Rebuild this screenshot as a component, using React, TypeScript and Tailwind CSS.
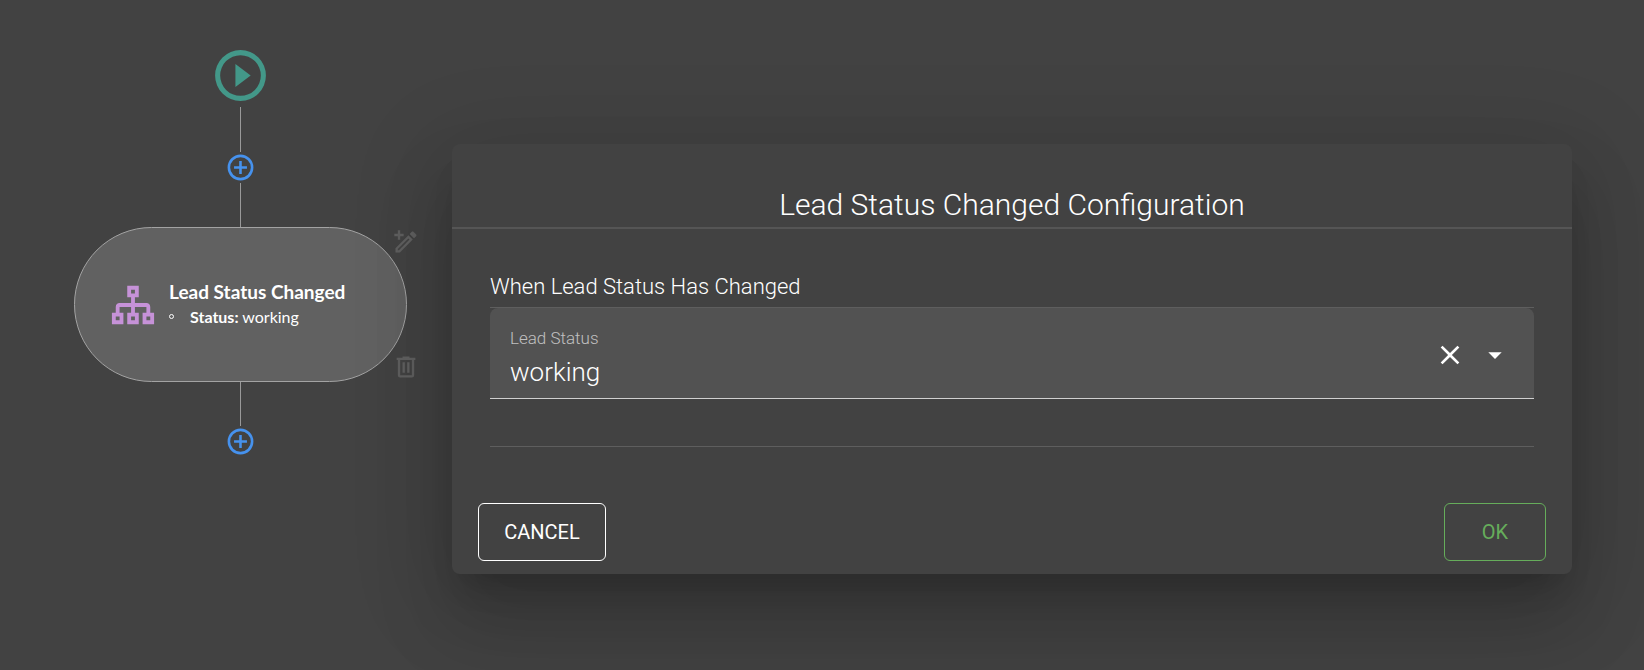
import { useState } from "react";

function Icon({ d, className }: { d: string; className: string }) {
  return (
    <svg viewBox="0 0 24 24" fill="currentColor" aria-hidden="true" className={className}>
      <path d={d} />
    </svg>
  );
}

const PLAY =
  "M12 2a10 10 0 1 0 0 20 10 10 0 0 0 0-20zm0 18a8 8 0 1 1 0-16 8 8 0 0 1 0 16zm-2-3.5 6-4.5-6-4.5v9z";
const PLUS_CIRCLE =
  "M12 20a8 8 0 1 1 0-16 8 8 0 0 1 0 16m0-18a10 10 0 1 0 0 20 10 10 0 0 0 0-20m1 5h-2v4H7v2h4v4h2v-4h4v-2h-4V7z";
const SITEMAP =
  "M9 2V8H11V11H5C3.89 11 3 11.89 3 13V16H1V22H7V16H5V13H11V16H9V22H15V16H13V13H19V16H17V22H23V16H21V13C21 11.89 20.11 11 19 11H13V8H15V2H9M11 4H13V6H11V4M3 18H5V20H3V18M11 18H13V20H11V18M19 18H21V20H19V18Z";
const PENCIL_PLUS =
  "M14.06 9L15 9.94L5.92 19H5V18.08L14.06 9M17.66 3C17.41 3 17.15 3.1 16.96 3.29L15.13 5.12L18.88 8.87L20.71 7.04C21.1 6.65 21.1 6 20.71 5.63L18.37 3.29C18.17 3.09 17.92 3 17.66 3M14.06 6.19L3 17.25V21H6.75L17.81 9.94L14.06 6.19M7 2V5H10V7H7V10H5V7H2V5H5V2H7Z";
const TRASH =
  "M9 3V4H4V6H5V19A2 2 0 0 0 7 21H17A2 2 0 0 0 19 19V6H20V4H15V3H9M7 6H17V19H7V6M9 8V17H11V8H9M13 8V17H15V8H13Z";
const CLOSE =
  "M19 6.41L17.59 5L12 10.59L6.41 5L5 6.41L10.59 12L5 17.59L6.41 19L12 13.41L17.59 19L19 17.59L13.41 12L19 6.41Z";
const MENU_DOWN = "M7 10L12 15L17 10H7Z";

function AddStep() {
  return (
    <button type="button" aria-label="Add step" className="text-[#4692ee]">
      <Icon d={PLUS_CIRCLE} className="size-[31px]" />
    </button>
  );
}

function Flow() {
  return (
    <section className="flex w-[333px] shrink-0 flex-col items-center pt-[45px]">
      <Icon d={PLAY} className="mb-px size-[61px] text-[#439889]" />
      <div className="h-[45px] w-px bg-[#999999]" />
      <AddStep />
      <div className="h-11 w-px bg-[#999999]" />
      <div className="relative flex h-[155px] w-full items-center rounded-full border border-[#a3a3a3] bg-[#616161] pl-[35px] font-['Lato',sans-serif] text-white">
        <Icon d={SITEMAP} className="mr-[13px] size-[46px] shrink-0 text-[#c692d8]" />
        <div className="pb-0.5">
          <h2 className="text-[19px] leading-[26px] font-bold">Lead Status Changed</h2>
          <ul>
            <li className="flex items-center text-base leading-6">
              <span className="mr-4 size-[5px] rounded-full border border-white" />
              <span>
                <b>Status:</b> working
              </span>
            </li>
          </ul>
        </div>
        <button type="button" aria-label="Edit step" className="absolute top-0 -right-3.5 text-[#606060]">
          <Icon d={PENCIL_PLUS} className="size-7" />
        </button>
        <button type="button" aria-label="Delete step" className="absolute -right-3.5 bottom-0 text-[#606060]">
          <Icon d={TRASH} className="size-7" />
        </button>
      </div>
      <div className="h-11 w-px bg-[#999999]" />
      <AddStep />
    </section>
  );
}

function Configuration() {
  const [status, setStatus] = useState("working");
  return (
    <section
      role="dialog"
      aria-labelledby="config-title"
      className="relative mt-36 min-w-0 flex-1 rounded-lg bg-[#424242] pb-[13px] shadow-[0_22px_30px_-14px_rgba(0,0,0,0.2),0_48px_76px_6px_rgba(0,0,0,0.14),0_18px_92px_16px_rgba(0,0,0,0.12)]"
    >
      <h1
        id="config-title"
        className="border-b-2 border-[#555555] pt-[41px] pb-0.5 text-center text-3xl leading-10 font-light"
      >
        Lead Status Changed Configuration
      </h1>
      <div className="px-[38px] pt-[41px]">
        <h2 className="pb-[3px] text-[22px] leading-[34px] font-light">When Lead Status Has Changed</h2>
        <div className="border-y border-[#5e5e5e] pb-[47px]">
          <div className="flex h-[91px] items-center rounded-t-lg border-b border-[#d0d0d0] bg-[#525252] pt-1 pr-[23px] pl-5">
            <div className="flex min-w-0 flex-1 flex-col pt-2.5">
              <label htmlFor="lead-status" className="text-[17px] leading-6 font-light text-[#c0c0c0]">
                Lead Status
              </label>
              <select
                id="lead-status"
                value={status}
                onChange={(e) => setStatus(e.target.value)}
                className="h-11 w-full appearance-none bg-transparent text-[26px] font-light text-white outline-none"
              >
                <option value="" />
                <option value="working">working</option>
              </select>
            </div>
            <button type="button" aria-label="Clear" onClick={() => setStatus("")} className="mr-[13px]">
              <Icon d={CLOSE} className="size-8" />
            </button>
            <Icon d={MENU_DOWN} className="size-8" />
          </div>
        </div>
      </div>
      <div className="flex justify-between px-[26px] pt-14 text-xl">
        <button type="button" className="h-[58px] w-32 rounded-md border border-white">
          CANCEL
        </button>
        <button type="button" className="h-[58px] w-[102px] rounded-md border border-[#66ad5b] text-[#66ad5b]">
          OK
        </button>
      </div>
    </section>
  );
}

export default function App() {
  return (
    <main className="flex min-h-screen items-start gap-[45px] overflow-hidden bg-[#424242] pr-[72px] pl-[74px] font-['Roboto',sans-serif] text-white">
      <Flow />
      <Configuration />
    </main>
  );
}
